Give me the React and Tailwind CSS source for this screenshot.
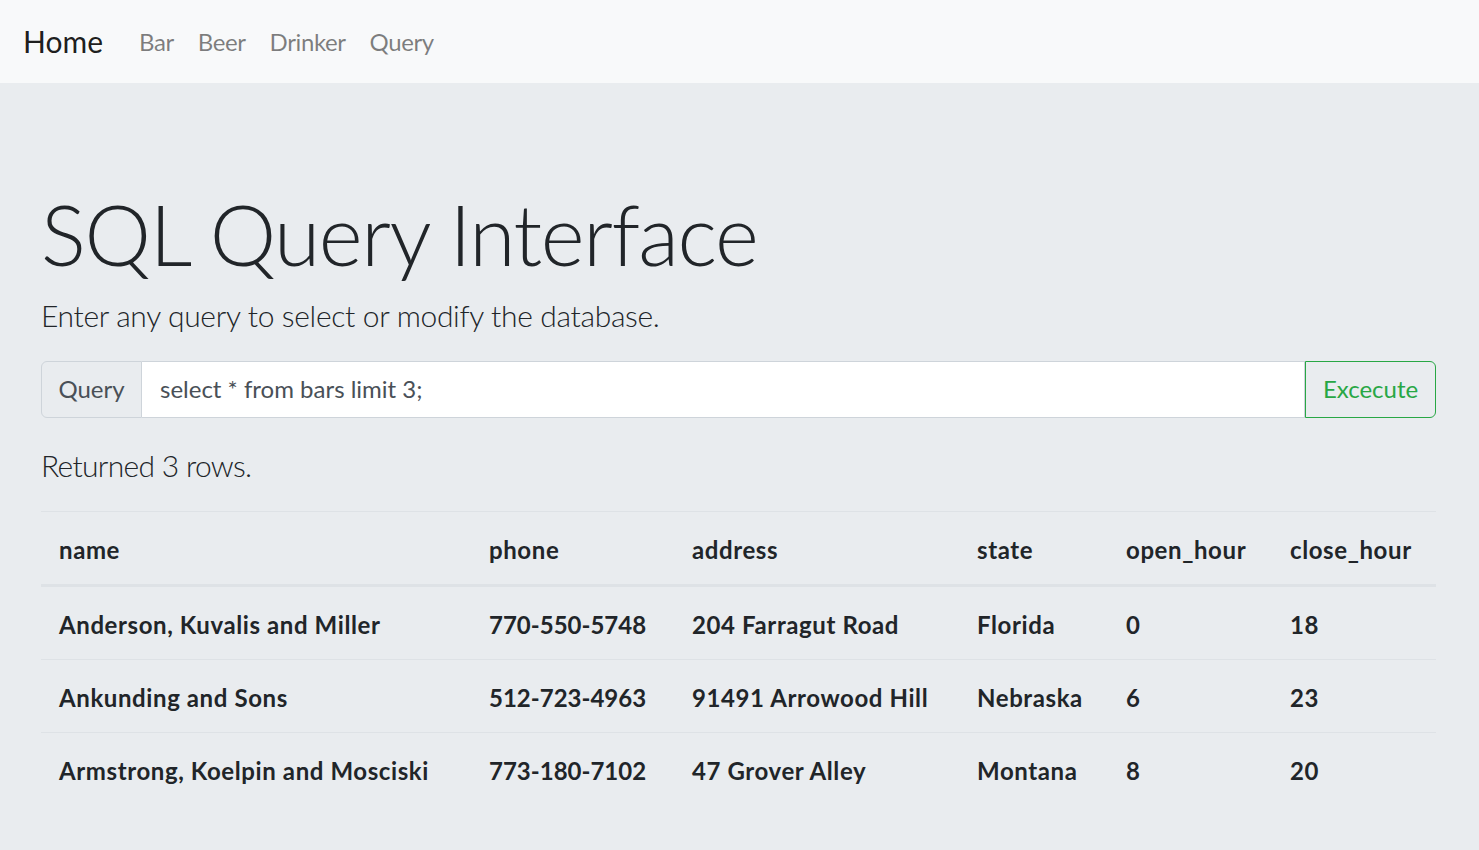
export default function App() {
  const rows = [
    ["Anderson, Kuvalis and Miller", "770-550-5748", "204 Farragut Road", "Florida", "0", "18"],
    ["Ankunding and Sons", "512-723-4963", "91491 Arrowood Hill", "Nebraska", "6", "23"],
    ["Armstrong, Koelpin and Mosciski", "773-180-7102", "47 Grover Alley", "Montana", "8", "20"],
  ];
  const heads = ["name", "phone", "address", "state", "open_hour", "close_hour"];
  return (
    <div className="min-h-screen bg-[#e9ecef] text-[#212529]" style={{ fontFamily: "Lato, 'Open Sans', sans-serif" }}>
      <nav className="h-[83px] bg-[#f8f9fa] flex items-center pl-[23px]">
        <span className="text-[30px] leading-[45px] text-black/90 mr-[24px]">Home</span>
        <div className="flex">
          {["Bar", "Beer", "Drinker", "Query"].map((l) => (
            <span key={l} className="px-[12px] text-[24px] leading-[36px] tracking-[-0.4px] text-black/50">{l}</span>
          ))}
        </div>
      </nav>
      <main className="pl-[41px] pr-[43px] pt-[101px] pb-[44px]">
        <h1 className="text-[84px] leading-[1.2] font-light tracking-[-1.4px]">SQL Query Interface</h1>
        <p className="mt-[8px] text-[30px] leading-[45px] font-light tracking-[-0.33px]">Enter any query to select or modify the database.</p>
        <div className="mt-[23px] flex h-[57px]">
          <div className="w-[101px] flex items-center justify-center bg-[#e9ecef] border border-[#ced4da] rounded-l-[6px] text-[24px] text-[#495057]">Query</div>
          <div className="flex-1 flex items-center bg-white border border-l-0 border-[#ced4da] px-[18px] text-[24px] text-[#495057]">select * from bars limit 3;</div>
          <div className="w-[131px] flex items-center justify-center border border-[#28a745] rounded-r-[6px] text-[24px] text-[#28a745]">Excecute</div>
        </div>
        <h4 className="mt-[29px] text-[30px] leading-[36px] font-light tracking-[-0.7px]">Returned 3 rows.</h4>
        <table className="mt-[28px] w-full table-fixed border-collapse text-[24px] leading-[36px] font-bold tracking-[0.6px]">
          <colgroup>
            <col className="w-[430px]" />
            <col className="w-[203px]" />
            <col className="w-[285px]" />
            <col className="w-[149px]" />
            <col className="w-[164px]" />
            <col className="w-[164px]" />
          </colgroup>
          <thead>
            <tr>
              {heads.map((h) => (
                <th key={h} className="text-left font-bold px-[18px] pt-[20px] pb-[16px] border-t border-t-[#dee2e6] border-b-[3px] border-b-[#dee2e6] whitespace-nowrap">{h}</th>
              ))}
            </tr>
          </thead>
          <tbody>
            {rows.map((r, i) => (
              <tr key={i}>
                {r.map((c, j) => (
                  <td key={j} className={`px-[18px] pt-[20px] pb-[16px] whitespace-nowrap ${j === 1 ? "tracking-[0px]" : ""} ${i === 0 ? "" : "border-t border-[#dee2e6]"}`}>{c}</td>
                ))}
              </tr>
            ))}
          </tbody>
        </table>
      </main>
    </div>
  );
}
